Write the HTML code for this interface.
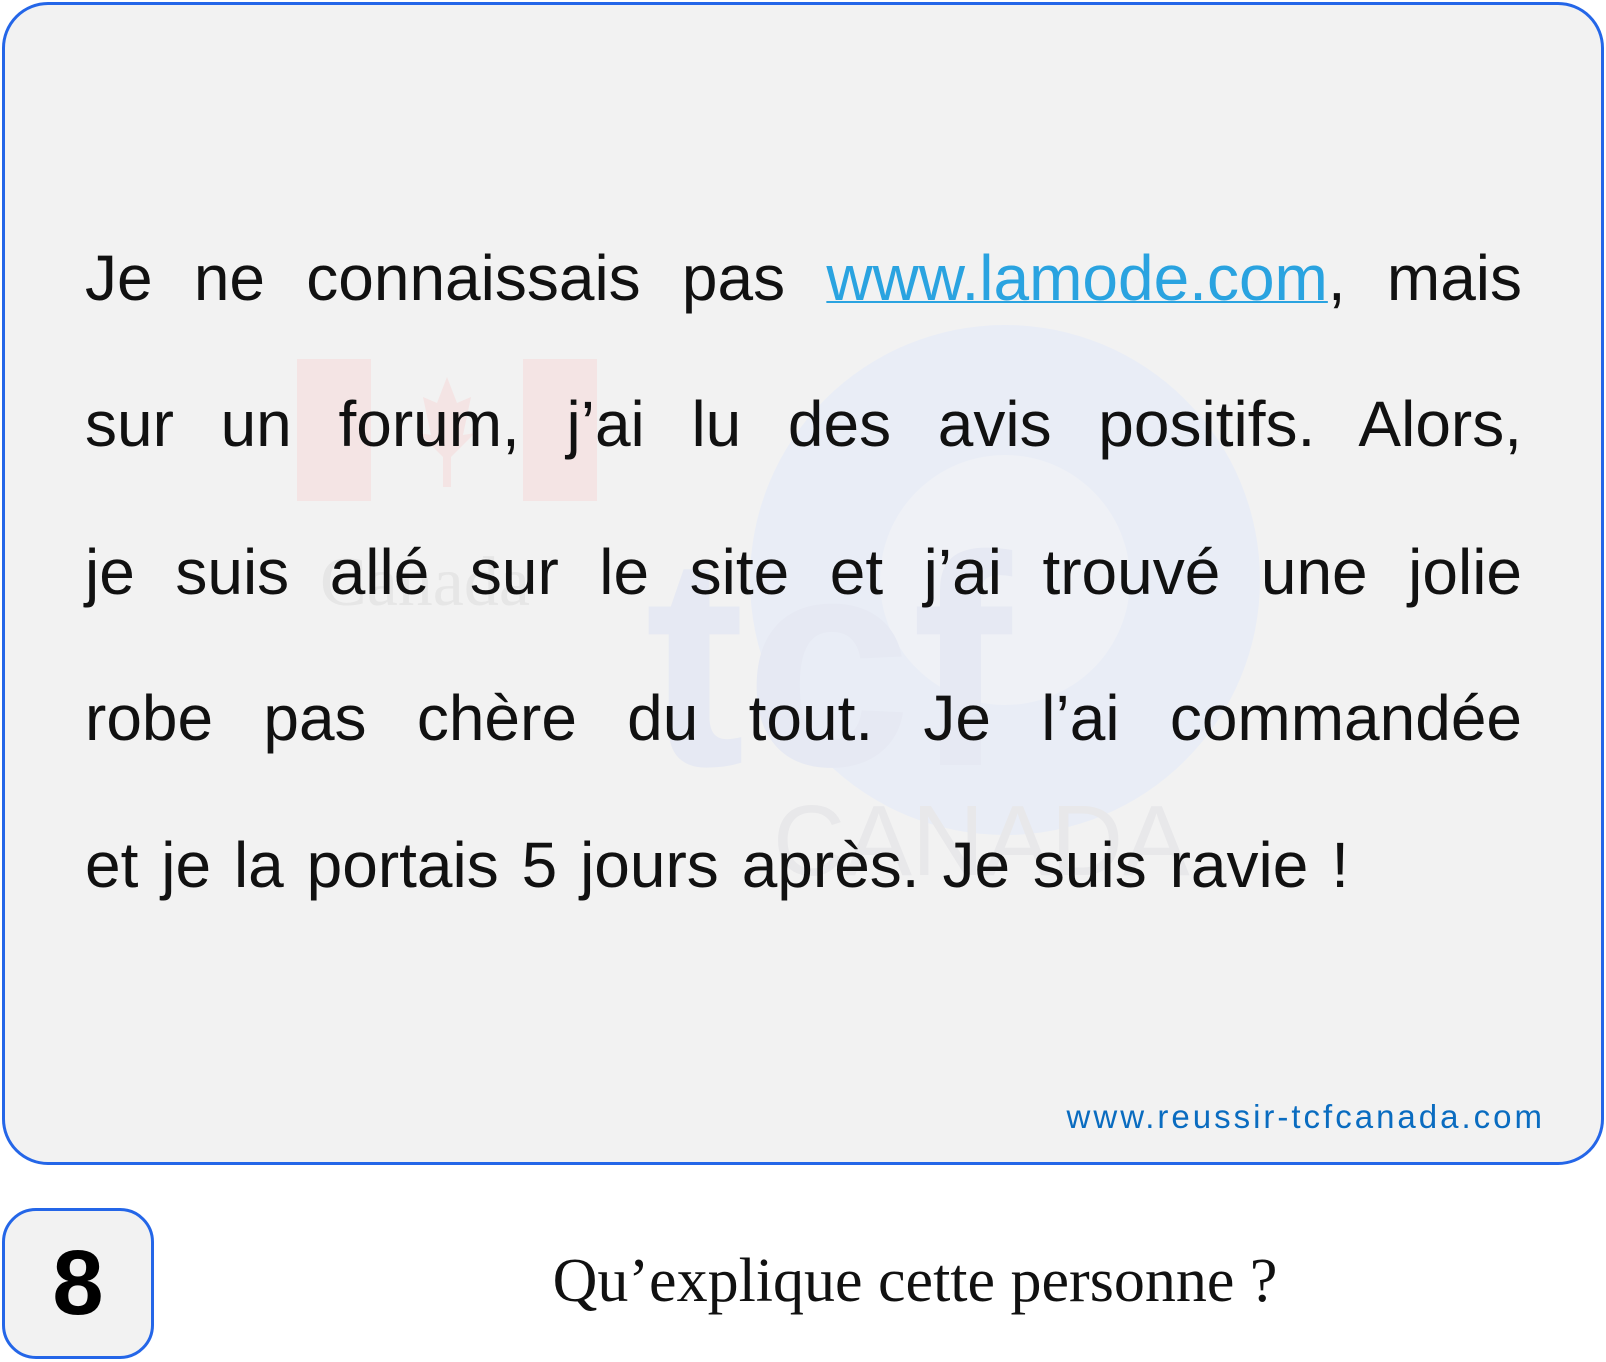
<!DOCTYPE html>
<html><head><meta charset="utf-8"><style>
html,body{margin:0;padding:0;background:#fff;width:1606px;height:1362px;overflow:hidden;position:relative;font-family:"Liberation Sans",sans-serif}
.card{position:absolute;left:2px;top:2px;width:1602px;height:1163px;border:3px solid #2466e8;border-radius:46px;background:#f2f2f2;overflow:hidden;box-sizing:border-box}
.line{position:absolute;left:80px;width:1437px;font-size:64px;color:#111;text-align:justify;text-align-last:justify;white-space:nowrap;line-height:1}
.line.last{width:1264px}
a{color:#2aa3e0;text-decoration:underline;text-decoration-thickness:2px}
.foot{position:absolute;right:56px;top:1093px;font-size:33px;letter-spacing:3px;color:#0a6cc0}
.num{position:absolute;left:2px;top:1208px;width:152px;height:151px;border:3px solid #2466e8;border-radius:34px;background:#f2f2f2;box-sizing:border-box;text-align:center;font-weight:bold;font-size:92px;line-height:144px;color:#000}
.q{position:absolute;left:300px;width:1230px;top:1246px;text-align:center;font-family:"Liberation Serif",serif;font-size:62px;color:#111}
</style></head><body>
<div class="card">
<svg width="1602" height="1163" style="position:absolute;left:0;top:0">
<rect x="292" y="354" width="74" height="142" fill="#f4e4e4"/>
<rect x="518" y="354" width="74" height="142" fill="#f4e4e4"/>
<path d="M442 372 L452 398 L466 392 L458 430 L470 428 L446 452 L446 482 L438 482 L438 452 L414 428 L426 430 L418 392 L432 398 Z" fill="#f4e4e4"/>
<circle cx="1000" cy="575" r="255" fill="#e9edf6"/>
<circle cx="1000" cy="575" r="125" fill="#eff1f6"/>
<text x="640" y="760" font-family="Liberation Sans" font-weight="bold" font-size="300" fill="#e6e9f3">tcf</text>
<text x="768" y="870" font-family="Liberation Sans" font-size="100" fill="#e8e8ea">CANADA</text>
<text x="315" y="600" font-family="Liberation Serif" font-size="70" fill="#e6e6e6">Canada</text>
</svg>
<div class="line" style="top:241px">Je ne connaissais pas <a>www.lamode.com</a>, mais</div>
<div class="line" style="top:387px">sur un forum, j’ai lu des avis positifs. Alors,</div>
<div class="line" style="top:535px">je suis allé sur le site et j’ai trouvé une jolie</div>
<div class="line" style="top:681px">robe pas chère du tout. Je l’ai commandée</div>
<div class="line last" style="top:828px">et je la portais 5 jours après. Je suis ravie !</div>
<div class="foot">www.reussir-tcfcanada.com</div>
</div>
<div class="num">8</div>
<div class="q">Qu’explique cette personne ?</div>
</body></html>
